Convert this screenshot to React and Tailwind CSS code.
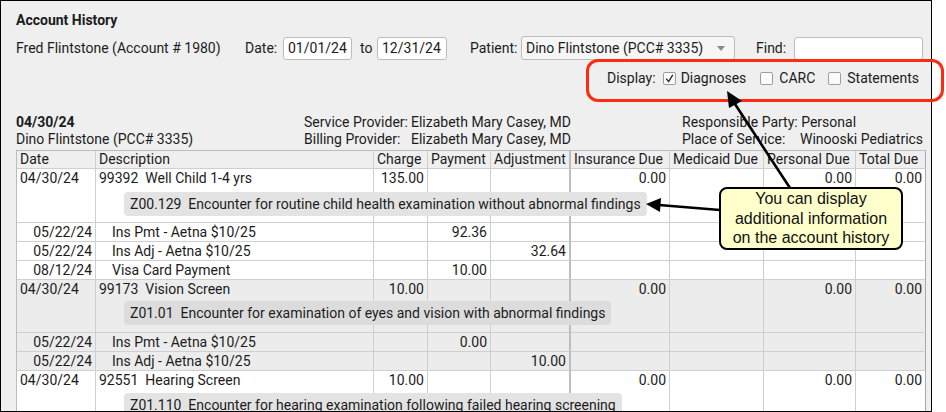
import React from "react";

const COLS =
  "grid grid-cols-[79px_278px_54px_63px_80px_99px_94px_92px_70px]";

const groups = [
  {
    gray: false,
    date: "04/30/24",
    desc: "99392  Well Child 1-4 yrs",
    charge: "135.00",
    h: "h-[54px]",
    pillTop: "top-[23px]",
    diag: "Z00.129  Encounter for routine child health examination without abnormal findings",
    subs: [
      ["05/22/24", "Ins Pmt - Aetna $10/25", "92.36", ""],
      ["05/22/24", "Ins Adj - Aetna $10/25", "", "32.64"],
      ["08/12/24", "Visa Card Payment", "10.00", ""],
    ],
  },
  {
    gray: true,
    date: "04/30/24",
    desc: "99173  Vision Screen",
    charge: "10.00",
    h: "h-[53px]",
    pillTop: "top-[21px]",
    diag: "Z01.01  Encounter for examination of eyes and vision with abnormal findings",
    subs: [
      ["05/22/24", "Ins Pmt - Aetna $10/25", "0.00", ""],
      ["05/22/24", "Ins Adj - Aetna $10/25", "", "10.00"],
    ],
  },
  {
    gray: false,
    date: "04/30/24",
    desc: "92551  Hearing Screen",
    charge: "10.00",
    h: "h-[54px]",
    pillTop: "top-[22px]",
    diag: "Z01.110  Encounter for hearing examination following failed hearing screening",
    subs: [],
  },
];

// one table cell, index decides the right border
const Cell = ({ i, right, children, className = "" }) => (
  <div
    className={`border-b border-b-[#cfcfcf] whitespace-pre overflow-hidden ${
      i === 4 ? "border-r-2 border-r-[#bdbdbd]" : i === 8 ? "border-r border-r-[#a9a9a9]" : "border-r border-r-[#cfcfcf]"
    } ${right ? "text-right pr-[3px]" : "pl-[3px]"} ${className}`}
  >
    {children}
  </div>
);

const Check = ({ on }) => (
  <span className="inline-flex w-[13px] h-[13px] border border-[#9d9d9d] rounded-[2px] bg-[#fbfbfb] items-center justify-center">
    {on && (
      <svg width="11" height="11" viewBox="0 0 11 11">
        <path d="M2.2 5.6 L4.6 8.6 L8.8 1.8" fill="none" stroke="#2a2a2a" strokeWidth="1.4" />
      </svg>
    )}
  </span>
);

const Input = ({ w, children }) => (
  <div className={`${w} h-[23px] bg-white border border-[#bcbcbc] rounded-[3px] pl-[4px] leading-[21px]`}>
    {children}
  </div>
);

export default function App() {
  return (
    <div className="relative w-[946px] h-[412px] bg-white overflow-hidden font-['Roboto',sans-serif] text-[14px] text-[#1c1c1c]">
      <div className="w-[932px] h-[412px] border border-black bg-[#efefef] overflow-hidden pt-[10px]">
        <div className="pl-[15px] font-bold leading-[19px]">Account History</div>

        {/* filters */}
        <div className="mt-[6px] h-[24px] flex items-center pl-[15px] whitespace-nowrap">
          <span className="w-[229px] shrink-0">Fred Flintstone (Account # 1980)</span>
          <span className="w-[38px] shrink-0">Date:</span>
          <Input w="w-[69px]">01/01/24</Input>
          <span className="w-[25px] pl-[8px] shrink-0">to</span>
          <Input w="w-[70px]">12/31/24</Input>
          <span className="ml-[23px] w-[51px] shrink-0">Patient:</span>
          <div className="w-[214px] h-[24px] bg-[#f6f6f6] border border-[#bcbcbc] rounded-[3px] pl-[4px] flex items-center justify-between pr-[9px]">
            <span>Dino Flintstone (PCC# 3335)</span>
            <span className="w-0 h-0 border-l-[4px] border-r-[4px] border-t-[5px] border-l-transparent border-r-transparent border-t-[#8a8a8a]" />
          </div>
          <span className="ml-[21px] w-[38px] shrink-0">Find:</span>
          <Input w="w-[129px]" />
        </div>

        <div className="mt-[8px] h-[20px] flex items-center pl-[606px] whitespace-nowrap">
          <span>Display:</span>
          <span className="ml-[7px] flex"><Check on /></span>
          <span className="ml-[5px]">Diagnoses</span>
          <span className="ml-[14px] flex"><Check /></span>
          <span className="ml-[6px]">CARC</span>
          <span className="ml-[13px] flex"><Check /></span>
          <span className="ml-[6px]">Statements</span>
        </div>

        {/* visit info */}
        <div className="mt-[26px] pl-[15px] flex leading-[17px] whitespace-nowrap">
          <div className="w-[288px] shrink-0">
            <div className="font-bold">04/30/24</div>
            <div>Dino Flintstone (PCC# 3335)</div>
          </div>
          <div className="w-[378px] shrink-0">
            <div className="flex"><span className="w-[107px] shrink-0">Service Provider:</span><span>Elizabeth Mary Casey, MD</span></div>
            <div className="flex"><span className="w-[107px] shrink-0">Billing Provider:</span><span>Elizabeth Mary Casey, MD</span></div>
          </div>
          <div className="shrink-0">
            <div>Responsible Party: Personal</div>
            <div className="flex"><span className="w-[118px] shrink-0">Place of Service:</span><span>Winooski Pediatrics</span></div>
          </div>
        </div>

        {/* table */}
        <div className="mt-[2px] ml-[15px] w-[910px] border-l border-t border-[#bdbdbd]">
          <div className={`${COLS} h-[18px] leading-[17px] bg-[#efefef]`}>
            {["Date", "Description", "Charge", "Payment", "Adjustment", "Insurance Due", "Medicaid Due", "Personal Due", "Total Due"].map((t, i) => (
              <Cell key={t} i={i}>{t}</Cell>
            ))}
          </div>

          {groups.map((g, gi) => {
            const bg = g.gray ? "bg-[#ececec]" : "bg-white";
            return (
              <div key={gi} className={bg}>
                <div className="relative">
                  <div className={`${COLS} ${g.h} leading-[19px]`}>
                    <Cell i={0}>{g.date}</Cell>
                    <Cell i={1}>{g.desc}</Cell>
                    <Cell i={2} right>{g.charge}</Cell>
                    <Cell i={3} />
                    <Cell i={4} />
                    <Cell i={5} right>0.00</Cell>
                    <Cell i={6} />
                    <Cell i={7} right>0.00</Cell>
                    <Cell i={8} right>0.00</Cell>
                  </div>
                  <div
                    className={`absolute left-[107px] ${g.pillTop} h-[24px] leading-[24px] px-[6px] rounded-[4px] whitespace-pre ${
                      g.gray ? "bg-[#dcdcdc]" : "bg-[#e3e3e3]"
                    }`}
                  >
                    {g.diag}
                  </div>
                </div>
                {g.subs.map((s, si) => (
                  <div key={si} className={`${COLS} h-[19px] leading-[18px]`}>
                    <Cell i={0} right>{s[0]}</Cell>
                    <Cell i={1} className="pl-[16px]">{s[1]}</Cell>
                    <Cell i={2} />
                    <Cell i={3} right>{s[2]}</Cell>
                    <Cell i={4} right>{s[3]}</Cell>
                    <Cell i={5} />
                    <Cell i={6} />
                    <Cell i={7} />
                    <Cell i={8} />
                  </div>
                ))}
              </div>
            );
          })}
        </div>
      </div>

      {/* annotation: red highlight */}
      <div className="absolute left-[586px] top-[59px] w-[358px] h-[43px] border-[3px] border-[#ff2a12] rounded-[12px]" />

      {/* annotation arrows */}
      <svg className="absolute left-0 top-0 pointer-events-none" width="946" height="412">
        <line x1="790" y1="188" x2="733" y2="101" stroke="#000" strokeWidth="2.6" />
        <polygon points="727,91 742,101 729,108" fill="#000" />
        <line x1="720" y1="210" x2="659" y2="205" stroke="#000" strokeWidth="2.6" />
        <polygon points="646,204 661,198 660,212" fill="#000" />
      </svg>

      {/* callout */}
      <div className="absolute left-[719px] top-[187px] w-[184px] h-[63px] bg-[#ffffcc] border-2 border-black rounded-[8px] flex flex-col items-center justify-center font-['Liberation_Sans',Arial,sans-serif] text-[16px] leading-[19.5px] text-[#111]">
        <div>You can display</div>
        <div>additional information</div>
        <div>on the account history</div>
      </div>
    </div>
  );
}
